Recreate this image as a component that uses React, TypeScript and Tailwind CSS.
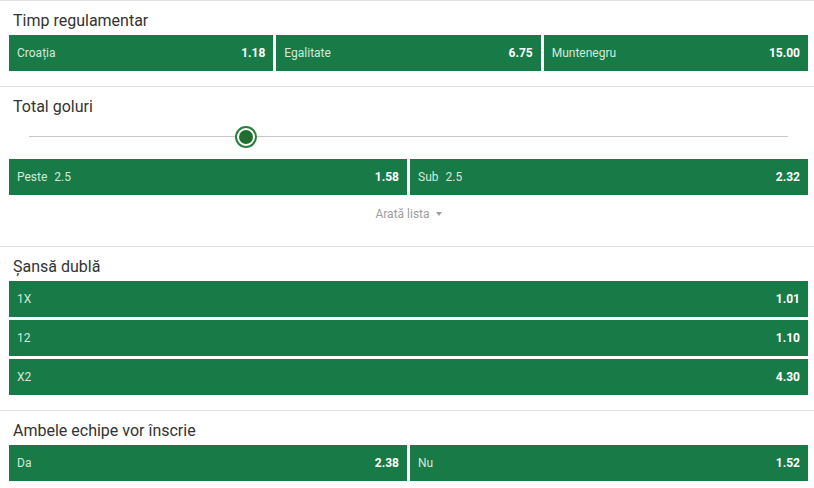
import React from "react";

type Odd = { label: string; line?: string; value: string };

function OddButton({ odd, className = "flex-1" }: { odd: Odd; className?: string }) {
  return (
    <button
      className={`flex h-9 items-center justify-between bg-[#187a47] px-2 text-[12px] ${className}`}
    >
      <span className="text-[#d3e9dc]">
        {odd.label}
        {odd.line && <span className="ml-[7px]">{odd.line}</span>}
      </span>
      <span className="font-bold text-white">{odd.value}</span>
    </button>
  );
}

function Section({ title, children }: { title: string; children: React.ReactNode }) {
  return (
    <section className="border-t border-[#e2e2e2] pb-[15px] pl-[9px] pr-[6px] pt-[10px]">
      <h2 className="mb-[4px] h-5 pl-1 text-[16px] leading-5 text-[#333]">{title}</h2>
      {children}
    </section>
  );
}

export default function App() {
  return (
    <div className="w-[814px] bg-white font-['Roboto',sans-serif]">
      {/* Timp regulamentar */}
      <Section title="Timp regulamentar">
        <div className="flex gap-[3px]">
          <OddButton odd={{ label: "Croația", value: "1.18" }} />
          <OddButton odd={{ label: "Egalitate", value: "6.75" }} />
          <OddButton odd={{ label: "Muntenegru", value: "15.00" }} />
        </div>
      </Section>

      {/* Total goluri */}
      <section className="border-t border-[#e2e2e2] pb-[21px] pl-[9px] pr-[6px] pt-[10px]">
        <h2 className="h-5 pl-1 text-[16px] leading-5 text-[#333]">Total goluri</h2>
        <div className="relative mx-5 h-[42px]">
          <div className="absolute left-0 right-0 top-[19px] h-px bg-[#c8c8c8]" />
          <div className="absolute left-[206px] top-[9px] flex h-[22px] w-[22px] items-center justify-center rounded-full border-2 border-[#2a7d3a] bg-white">
            <div className="h-[14px] w-[14px] rounded-full bg-[#1f6e2d]" />
          </div>
        </div>
        <div className="flex gap-[3px]">
          <OddButton odd={{ label: "Peste", line: "2.5", value: "1.58" }} />
          <OddButton odd={{ label: "Sub", line: "2.5", value: "2.32" }} />
        </div>
        <div className="mt-2 flex h-[22px] items-center justify-center gap-[6px] text-[12px] text-[#9e9e9e]">
          <span>Arată lista</span>
          <svg width="6" height="4" viewBox="0 0 6 4">
            <path d="M0 0h6L3 4z" fill="#9e9e9e" />
          </svg>
        </div>
      </section>

      {/* Șansă dublă */}
      <Section title="Șansă dublă">
        <div className="flex flex-col gap-[3px]">
          <OddButton className="w-full shrink-0" odd={{ label: "1X", value: "1.01" }} />
          <OddButton className="w-full shrink-0" odd={{ label: "12", value: "1.10" }} />
          <OddButton className="w-full shrink-0" odd={{ label: "X2", value: "4.30" }} />
        </div>
      </Section>

      {/* Ambele echipe vor înscrie */}
      <Section title="Ambele echipe vor înscrie">
        <div className="flex gap-[3px]">
          <OddButton odd={{ label: "Da", value: "2.38" }} />
          <OddButton odd={{ label: "Nu", value: "1.52" }} />
        </div>
      </Section>
    </div>
  );
}
